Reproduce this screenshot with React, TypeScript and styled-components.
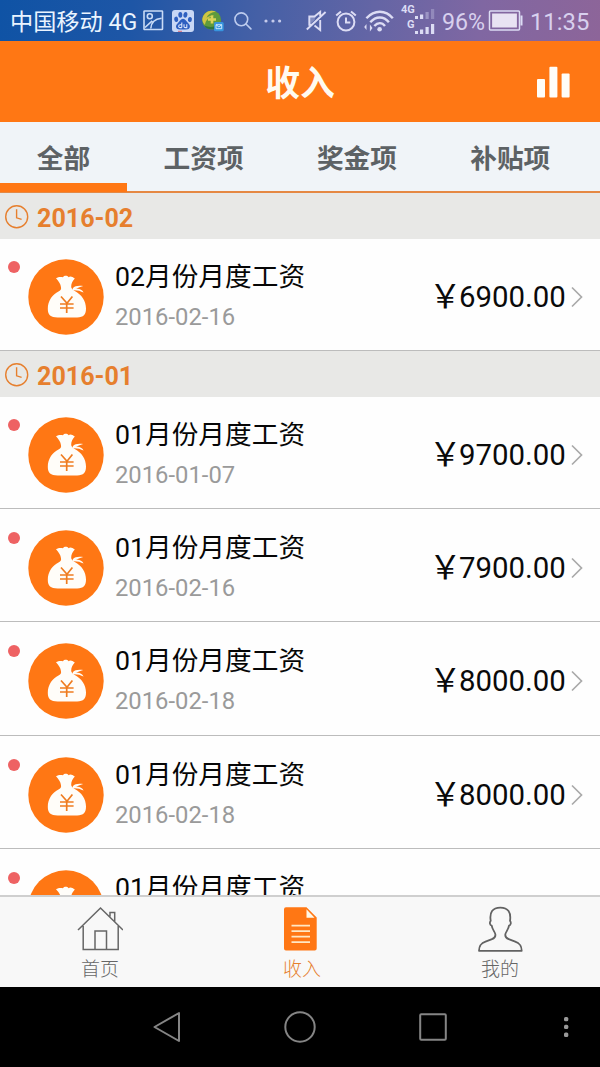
import React from 'react';
import styled, { createGlobalStyle } from 'styled-components';

const ORANGE = '#ff7714';

const GlobalStyle = createGlobalStyle`
  * { box-sizing: border-box; }
  body {
    margin: 0;
    font-family: Roboto, "Noto Sans CJK SC", sans-serif;
    background: #000;
  }
  svg { display: block; flex: none; }
`;

const Phone = styled.div`
  width: 600px;
  height: 1067px;
  display: flex;
  flex-direction: column;
  overflow: hidden;
  background: #fefefe;
`;

const StatusBar = styled.header`
  height: 41px;
  flex: none;
  display: flex;
  align-items: center;
  color: #dcdcf4;
  background: linear-gradient(97deg, #0f53a5 0%, #1e56a6 22%, #4560a6 43%, #6465a5 62%, #8067a2 80%, #8d6599 100%);
`;

const StatusSlot = styled.div<{ $gap: number; $width: number }>`
  width: ${(p) => p.$width}px;
  margin-left: ${(p) => p.$gap}px;
  flex: none;
`;

const StatusText = styled(StatusSlot)<{ $size: number; $bright?: boolean }>`
  font-size: ${(p) => p.$size}px;
  line-height: 36px;
  padding-top: 2px;
  white-space: nowrap;
  color: ${(p) => (p.$bright ? '#eaf4ff' : '#d8d0ee')};
`;

const TitleBar = styled.div`
  height: 81px;
  flex: none;
  display: grid;
  grid-template-columns: 100px 1fr 100px;
  align-items: center;
  background: ${ORANGE};
`;

const Title = styled.h1`
  grid-column: 2;
  margin: 0;
  padding-top: 4px;
  text-align: center;
  font-size: 34.8px;
  line-height: 50px;
  font-weight: 700;
  color: #fffaf0;
`;

const ChartButton = styled.div`
  justify-self: end;
  padding: 1px 30px 0 0;
`;

const Tabs = styled.nav`
  height: 71px;
  flex: none;
  display: flex;
  background: #f0f4f8;
  border-bottom: 2px solid #e58843;
`;

const Tab = styled.div<{ $active?: boolean }>`
  width: ${(p) => (p.$active ? 127 : 153.3)}px;
  height: 70px;
  padding-top: 17px;
  text-align: center;
  font-size: 26.7px;
  line-height: 40px;
  font-weight: 700;
  color: #5d6265;
  border-bottom: ${(p) => (p.$active ? `9px solid ${ORANGE}` : 'none')};
`;

const List = styled.main`
  flex: 1;
  min-height: 0;
  overflow: hidden;
`;

const MonthHeader = styled.div`
  height: 46px;
  display: flex;
  align-items: center;
  gap: 8px;
  padding: 2px 0 0 5px;
  background: #e8e8e6;
  color: #e67f2e;
  font-size: 25.1px;
  font-weight: 700;
`;

const MonthLabel = styled.span`
  padding-top: 2px;
`;

const Row = styled.article<{ $first?: boolean }>`
  height: ${(p) => (p.$first ? 112 : 113.35)}px;
  display: flex;
  align-items: flex-start;
  padding-top: ${(p) => (p.$first ? 20 : 21)}px;
  border-bottom: 1px solid #bcbcbc;
`;

const Unread = styled.i`
  width: 12px;
  height: 12px;
  margin: 2px 8px 0 8px;
  border-radius: 50%;
  background: #ee6263;
`;

const Bag = styled.div`
  width: 76px;
  height: 76px;
`;

const Info = styled.div`
  flex: 1;
  margin-left: 11px;
`;

const Name = styled.div`
  margin-top: -2px;
  font-size: 26.7px;
  line-height: 40px;
  color: #060606;
  white-space: nowrap;
`;

const DateText = styled.div`
  margin-top: 5px;
  font-size: 23.8px;
  line-height: 30px;
  color: #9a9a9a;
`;

const Amount = styled.div`
  display: flex;
  align-items: center;
  height: 76px;
  padding-right: 17px;
  font-size: 29.4px;
  color: #0a0a0a;
  white-space: nowrap;
`;

const Currency = styled.span`
  width: 30px;
  padding-bottom: 7px;
  font-size: 32.5px;
`;

const Digits = styled.span`
  width: 112px;
`;

const BottomTabs = styled.nav`
  height: 92px;
  flex: none;
  display: grid;
  grid-template-columns: repeat(3, 1fr);
  border-top: 2px solid #cfcfcf;
  background: #f8f8f8;
`;

const BottomTab = styled.div<{ $active?: boolean }>`
  display: flex;
  flex-direction: column;
  align-items: center;
  padding-top: 9px;
  font-size: 19px;
  line-height: 28px;
  font-weight: 300;
  color: ${(p) => (p.$active ? '#e67f2e' : '#666')};
`;

const BottomIcon = styled.div`
  height: 50px;
`;

const BottomLabel = styled.span<{ $shift?: number }>`
  padding-left: ${(p) => p.$shift ?? 0}px;
`;

const SystemBar = styled.footer`
  height: 80px;
  flex: none;
  display: flex;
  align-items: center;
  padding-left: 152px;
  background: #000;
`;

const SystemKey = styled.div<{ $gap?: number }>`
  margin-left: ${(p) => p.$gap ?? 0}px;
`;

const ImageIcon = () => (
  <svg width="21" height="21" viewBox="0 0 21 21" fill="none" stroke="#c9dbf6" strokeWidth="1.6">
    <rect x="1" y="1" width="18.5" height="18.5" rx="0.6" />
    <circle cx="6.8" cy="6.3" r="2.5" />
    <path d="M2 17.5 9.2 10.8M7.8 18.5c.5-7 4-9.5 10.8-10.2" />
  </svg>
);

const PawIcon = () => (
  <svg width="22" height="22" viewBox="0 0 22 22">
    <rect width="22" height="22" rx="3" fill="#c8d7f5" />
    <g fill="#2e5fc0">
      <ellipse cx="4.2" cy="9.3" rx="2" ry="2.7" transform="rotate(-12 4.2 9.3)" />
      <ellipse cx="8.3" cy="4.8" rx="2" ry="2.9" />
      <ellipse cx="13.4" cy="4.8" rx="2" ry="2.9" transform="rotate(8 13.4 4.8)" />
      <ellipse cx="17.9" cy="9.5" rx="2" ry="2.6" transform="rotate(12 17.9 9.5)" />
      <path d="M11 8.7c2.4 0 3.2 2.4 5 4.2 1.8 1.7 2.3 3 1.7 4.6-.7 2-2.7 2.1-6.7 2.1s-6.1-.1-6.8-2.1c-.5-1.6 0-2.9 1.8-4.6C7.9 11.1 8.6 8.7 11 8.7z" />
    </g>
    <g fill="none" stroke="#dbe6fb" strokeWidth="1.1">
      <path d="M9.8 12.6v5M9.8 14.8H8.3c-2.2 0-2.2 2.8 0 2.8h1.5M12 14.3v2.2c0 .8.5 1.1 1.2 1.1h1.6v-3.3" />
    </g>
    <path d="M6 21.3h4" stroke="#d96a78" strokeWidth="1" />
  </svg>
);

const ShieldBallIcon = () => (
  <svg width="22" height="22" viewBox="0 0 22 22">
    <circle cx="9.6" cy="10" r="9.5" fill="#5f9a3c" />
    <path d="M.3 9C1.5 2.5 8-1 14 1.8c-4.500.2-8 2.200-9.500 6 2-1.600 5-2.500 8-2.500C7 7 3.500 10 3 15 1.500 13.500.2 11.500.3 9z" fill="#cfc444" />
    <path d="M10 5.500v8M6 9.500h8" stroke="#dcd45a" strokeWidth="2.600" />
    <path d="M2 15.500c3 4 8 5 12 2.500l-1-2c-3.500 1.500-7 1-11-.5z" fill="#2e7440" />
    <rect x="12" y="12" width="9.700" height="9.300" rx="1.500" fill="#3795df" />
    <path d="M14 14.700h5.700v4H14zl2.850 2.200L19.700 14.700" fill="none" stroke="#d7efff" strokeWidth=".9" />
  </svg>
);

const SearchIcon = () => (
  <svg width="18" height="18" viewBox="0 0 18 18" fill="none" stroke="#bccbee" strokeWidth="1.600" strokeLinecap="round">
    <circle cx="7.300" cy="7.300" r="6.400" />
    <path d="m12 12 4.900 4.900" />
  </svg>
);

const MoreIcon = () => (
  <svg width="18" height="4" viewBox="0 0 18 4" fill="#c5cbec">
    <circle cx="2" cy="2" r="1.600" />
    <circle cx="9" cy="2" r="1.600" />
    <circle cx="15.600" cy="2" r="1.600" />
  </svg>
);

const MuteIcon = () => (
  <svg width="21" height="22" viewBox="0 0 21 22" fill="none" stroke="currentColor" strokeWidth="1.900">
    <path d="M9.500 6.500H3.300v8.200h2M8.500 6.500l5.700-4.600v4M8.500 15.500l5.700 4.500V10M.8 19.500 19.600 2" />
    <path d="M3.300 7h5.500v2.700l-5 4.500z" fill="currentColor" stroke="none" opacity=".35" />
  </svg>
);

const AlarmIcon = () => (
  <svg width="22" height="22" viewBox="0 0 22 22" fill="none" stroke="currentColor" strokeWidth="2">
    <circle cx="11" cy="12" r="8.400" />
    <path d="M11 7.500V12.500h4.300M1.200 5.600 6 1.400M20.800 5.600 16 1.400" />
  </svg>
);

const WifiIcon = () => (
  <svg width="30" height="22" viewBox="0 0 30 22" fill="none" stroke="currentColor" strokeWidth="2.400">
    <path d="M2.400 8.200c8-8.600 19.200-8.600 26.400 0M6.300 12.200c5.600-6.300 13.400-6.300 18.600 0M10.300 16c3.400-3.900 7.700-3.900 10.700 0" />
    <circle cx="15.600" cy="19.300" r="2.300" fill="currentColor" stroke="none" />
    <path d="m.2 17 2.300-3v6zM8.500 18l-2.600 3.600v-7z" fill="currentColor" stroke="none" />
  </svg>
);

const SignalGroup = styled.div`
  display: flex;
  flex-direction: column;
  padding-bottom: 3px;
`;

const SignalRow = styled.div`
  display: flex;
  align-items: flex-end;
  height: 15px;
`;

const SignalLabel = styled.span<{ $indent: number }>`
  width: 13px;
  padding-left: ${(p) => p.$indent}px;
  align-self: flex-start;
  font-size: 11px;
  line-height: 12px;
  font-weight: 700;
  white-space: nowrap;
`;

const SignalBars = ({ dim }: { dim?: boolean }) => (
  <svg width="21" height="12" viewBox="0 0 21 12" fill="currentColor">
    <rect x="1" y="9" width="3" height="3" />
    <rect x="6" y="7.500" width="3.200" height="4.500" />
    <rect x="11.500" y="5" width="3.200" height="7" opacity={dim ? 0.4 : 1} />
    <rect x="17" y="2" width="3.200" height="10" opacity={dim ? 0.3 : 1} />
  </svg>
);

const BatteryIcon = () => (
  <svg width="35" height="22" viewBox="0 0 35 22">
    <rect x="1.500" y="1" width="30" height="19" rx="1" fill="none" stroke="currentColor" strokeWidth="1.500" />
    <rect x="4.100" y="3.500" width="24.800" height="14" fill="#e8e3f3" />
    <path d="M32.500 5.500h2v10h-2z" fill="currentColor" />
  </svg>
);

const BarsIcon = () => (
  <svg width="34" height="32" viewBox="0 0 34 32" fill="#fffdf8">
    <rect x="1" y="13" width="8" height="18.500" rx="1" />
    <rect x="13.400" y="0.700" width="8" height="30.800" rx="1" />
    <rect x="25.600" y="7.500" width="8" height="24" rx="1" />
  </svg>
);

const ClockIcon = () => (
  <svg width="24" height="24" viewBox="0 0 24 24" fill="none" stroke="currentColor" strokeWidth="1.400">
    <circle cx="11.700" cy="11.700" r="11" />
    <path d="M11.600 4.300v8.500l5 1.500" />
  </svg>
);

const MoneyBagIcon = () => (
  <svg width="76" height="76" viewBox="0 0 76 76">
    <circle cx="38" cy="38" r="37.700" fill={ORANGE} />
    <g fill="#fffdf9">
      <path d="M28 19.300c2.300-1.500 4.500-1.300 7-1.100 1.200-1.800 4.200-1.800 5.600 0 2-1.400 4 0 6.200 1.300-2.400 2.800-3.800 5.200-3.600 8.600.1 1.600 1.500 2.600 3.600 3.800C53.500 35.500 58 41.500 58 49.500c0 6.500-2.500 8.500-8.800 9H29.600c-7 0-9.800-2.400-9.800-8.700 0-8.300 5-14.500 10.700-17.300 2.600-1.300 2.800-2.400 2.500-4.300-.4-3.200-2.200-5.900-5-8.900z" />
      <path d="M44.800 29.200c2-2.200 5.800-2.900 10.400-2.100-2.500.8-5 1.700-7.600 2.900 3.500-.6 6.300.4 8 3.600-3.200-1.900-6.900-2.700-10.800-2.400z" />
    </g>
    <path d="m33 37.500 6 6.700 5.400-6.700M38.700 44V54M32 45h13.600M32 49h13.600" fill="none" stroke="#ef7c20" strokeWidth="1.700" />
  </svg>
);

const ChevronIcon = () => (
  <svg width="12" height="22" viewBox="0 0 12 22" fill="none" stroke="#aaa" strokeWidth="1.700">
    <path d="m1 1.500 9.500 9.500L1 20.500" />
  </svg>
);

const HomeIcon = () => (
  <svg width="46" height="46" viewBox="0 0 46 46" fill="none" stroke="#666" strokeWidth="1.500">
    <path d="M1 24 23.500 2 46 24M6.200 20v23.500h35V20M18 43.500V25H29.500v18.500M33 10.500V6.500h4.700V16" />
  </svg>
);

const DocumentIcon = () => (
  <svg width="36" height="46" viewBox="0 0 36 46">
    <path d="M4 1.300h20.500L34.700 11.500v31q0 2-2 2H4q-2 0-2-2v-39.200q0-2 2-2z" fill={ORANGE} />
    <path d="M24.500 3.200v8.500h8z" fill="#fff8e8" />
    <path d="M9.500 19.700h18.500M9.500 25.200h18.500M9.500 30.700h18.500M9.500 36.200h18.500" stroke="#ffe8c4" strokeWidth="1.700" />
  </svg>
);

const PersonIcon = () => (
  <svg width="46" height="47" viewBox="0 0 46 47" fill="none" stroke="#626262" strokeWidth="1.800" strokeLinejoin="round">
    <path d="M2 44.800c.2-5.400 2-7.500 6.500-9.200l6.500-2.500c2.700-1.100 3.800-2.600 3.300-5-.4-2.300-3-4.400-3.600-8.400-2-.5-2.300-3.500-1-4.800C12.300 6.500 15.500 1.600 23.300 1.600S34.300 6.500 33 14.900c1.300 1.300 1 4.300-1 4.800-.6 4-3.200 6.100-3.600 8.400-.5 2.400.6 3.900 3.300 5l6.500 2.500c4.500 1.700 6.300 3.800 6.500 9.200z" />
  </svg>
);

const SYSTEM_STROKE = { fill: 'none', stroke: '#858585', strokeWidth: 2, strokeLinejoin: 'round' as const };

const BackIcon = () => (
  <svg width="29" height="32" viewBox="0 0 29 32" {...SYSTEM_STROKE}>
    <path d="M27 2v28L2.500 16z" />
  </svg>
);

const CircleIcon = () => (
  <svg width="32" height="32" viewBox="0 0 32 32" {...SYSTEM_STROKE}>
    <circle cx="16" cy="16" r="14.700" />
  </svg>
);

const SquareIcon = () => (
  <svg width="28" height="28" viewBox="0 0 28 28" {...SYSTEM_STROKE}>
    <rect x="1.200" y="1.200" width="25.600" height="25.600" rx="1" />
  </svg>
);

const MenuDotsIcon = () => (
  <svg width="6" height="22" viewBox="0 0 6 22" fill="#999">
    <rect x="1" y="1" width="4.300" height="4.300" rx="1.500" />
    <rect x="1" y="8.800" width="4.300" height="4.300" rx="1.500" />
    <rect x="1" y="16.600" width="4.300" height="4.300" rx="1.500" />
  </svg>
);

type Entry = { name: string; date: string; amount: string };

const MONTHS: { month: string; entries: Entry[] }[] = [
  {
    month: '2016-02',
    entries: [{ name: '02月份月度工资', date: '2016-02-16', amount: '6900.00' }],
  },
  {
    month: '2016-01',
    entries: [
      { name: '01月份月度工资', date: '2016-01-07', amount: '9700.00' },
      { name: '01月份月度工资', date: '2016-02-16', amount: '7900.00' },
      { name: '01月份月度工资', date: '2016-02-18', amount: '8000.00' },
      { name: '01月份月度工资', date: '2016-02-18', amount: '8000.00' },
      { name: '01月份月度工资', date: '', amount: '' },
    ],
  },
];

const IncomeRow = ({ entry, first }: { entry: Entry; first: boolean }) => (
  <Row $first={first}>
    <Unread />
    <Bag><MoneyBagIcon /></Bag>
    <Info>
      <Name>{entry.name}</Name>
      {entry.date && <DateText>{entry.date}</DateText>}
    </Info>
    {entry.amount && (
      <Amount>
        <Currency>￥</Currency>
        <Digits>{entry.amount}</Digits>
        <ChevronIcon />
      </Amount>
    )}
  </Row>
);

export default function App() {
  return (
    <Phone>
      <GlobalStyle />
      <StatusBar>
        <StatusText $gap={10} $width={129} $size={23.2} $bright>中国移动 4G</StatusText>
        <StatusSlot $gap={4} $width={21}><ImageIcon /></StatusSlot>
        <StatusSlot $gap={8} $width={22}><PawIcon /></StatusSlot>
        <StatusSlot $gap={8} $width={22}><ShieldBallIcon /></StatusSlot>
        <StatusSlot $gap={10} $width={18}><SearchIcon /></StatusSlot>
        <StatusSlot $gap={12} $width={18}><MoreIcon /></StatusSlot>
        <StatusSlot $gap={24} $width={21}><MuteIcon /></StatusSlot>
        <StatusSlot $gap={8} $width={22}><AlarmIcon /></StatusSlot>
        <StatusSlot $gap={7} $width={30}><WifiIcon /></StatusSlot>
        <StatusSlot $gap={7} $width={34}>
          <SignalGroup>
            <SignalRow><SignalLabel $indent={0}>4G</SignalLabel><SignalBars dim /></SignalRow>
            <SignalRow><SignalLabel $indent={6}>G</SignalLabel><SignalBars /></SignalRow>
          </SignalGroup>
        </StatusSlot>
        <StatusText $gap={7} $width={46} $size={23.2}>96%</StatusText>
        <StatusSlot $gap={0} $width={35}><BatteryIcon /></StatusSlot>
        <StatusText $gap={7} $width={62} $size={23.8}>11:35</StatusText>
      </StatusBar>

      <TitleBar>
        <Title>收入</Title>
        <ChartButton><BarsIcon /></ChartButton>
      </TitleBar>

      <Tabs>
        <Tab $active>全部</Tab>
        <Tab>工资项</Tab>
        <Tab>奖金项</Tab>
        <Tab>补贴项</Tab>
      </Tabs>

      <List>
        {MONTHS.map(({ month, entries }) => (
          <section key={month}>
            <MonthHeader><ClockIcon /><MonthLabel>{month}</MonthLabel></MonthHeader>
            {entries.map((entry, i) => (
              <IncomeRow key={i} entry={entry} first={i === 0} />
            ))}
          </section>
        ))}
      </List>

      <BottomTabs>
        <BottomTab><BottomIcon><HomeIcon /></BottomIcon><BottomLabel>首页</BottomLabel></BottomTab>
        <BottomTab $active><BottomIcon><DocumentIcon /></BottomIcon><BottomLabel $shift={4}>收入</BottomLabel></BottomTab>
        <BottomTab><BottomIcon><PersonIcon /></BottomIcon><BottomLabel>我的</BottomLabel></BottomTab>
      </BottomTabs>

      <SystemBar>
        <SystemKey><BackIcon /></SystemKey>
        <SystemKey $gap={103}><CircleIcon /></SystemKey>
        <SystemKey $gap={103}><SquareIcon /></SystemKey>
        <SystemKey $gap={116}><MenuDotsIcon /></SystemKey>
      </SystemBar>
    </Phone>
  );
}
